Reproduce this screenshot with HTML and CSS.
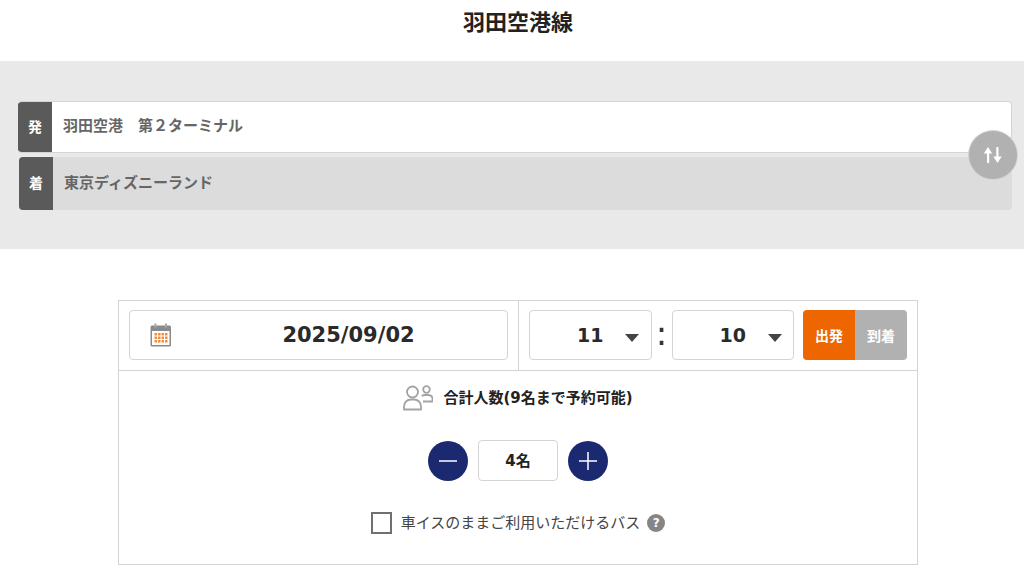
FILE: index.html
```html
<!DOCTYPE html>
<html lang="ja">
<head>
  <meta charset="UTF-8">
  <meta name="viewport" content="width=device-width, initial-scale=1.0">
  <title>羽田空港線</title>
  <link rel="stylesheet" href="styles.css">
</head>
<body>

<div class="page">
  <h1 class="line-title">羽田空港線</h1>

  <div class="route-band">
    <div class="route-box">
      <div class="route-row route-from">
        <span class="route-label">発</span>
        <span class="route-name">羽田空港　第２ターミナル</span>
      </div>
      <div class="route-row route-to">
        <span class="route-label">着</span>
        <span class="route-name">東京ディズニーランド</span>
      </div>
      <button class="swap-btn" aria-label="入れ替え">
        <svg width="20" height="18" viewBox="0 0 20 18">
          <path d="M5 1L.8 7.500H4V17h2.200V7.500H9.200zM14.500 17l4.200-6.500h-3.200V1h-2.200v9.500H10.300z" fill="#fff"/>
        </svg>
      </button>
    </div>
  </div>

  <div class="search-card">
    <div class="when-row">
      <div class="date-cell">
        <div class="field date-field">
          <svg class="cal-icon" width="22" height="24" viewBox="0 0 22 24">
            <rect x="0.500" y="2.500" width="20.500" height="21" rx="1.500" fill="#8a8a8a"/>
            <rect x="2" y="8" width="17.500" height="14" fill="#fff"/>
            <path d="M5.500 0.500v4M16 0.500v4" stroke="#a8a8a8" stroke-width="2"/>
            <path d="M4.500 10h2.500v2.500H4.500zM8 10h2.500v2.500H8zM11.500 10H14v2.500h-2.500zM15 10h2.500v2.500H15zM4.500 13.500h2.500V16H4.500zM8 13.500h2.500V16H8zM11.500 13.500H14V16h-2.500zM15 13.500h2.500V16H15zM4.500 17h2.500v2.500H4.500zM8 17h2.500v2.500H8zM11.500 17H14v2.500h-2.500zM15 17h2.500v2.500H15z" fill="#f58b3c"/>
          </svg>
          <span class="date-value">2025/09/02</span>
        </div>
      </div>
      <div class="time-cell">
        <div class="field time-field"><span class="time-value">11</span><span class="caret"></span></div>
        <span class="colon">:</span>
        <div class="field time-field"><span class="time-value">10</span><span class="caret"></span></div>
        <div class="dep-arr">
          <span class="dep-btn">出発</span>
          <span class="arr-btn">到着</span>
        </div>
      </div>
    </div>

    <div class="people-head">
      <svg width="30" height="26" viewBox="0 0 30 26" fill="none" stroke="#a3a3a3" stroke-width="1.800">
        <circle cx="9.500" cy="7" r="5.500"/>
        <path d="M1 24.500v-3c0-4 3-7 7-7h3c4 0 7 3 7 7v3z" stroke-linejoin="round"/>
        <circle cx="23.500" cy="4.500" r="3.300"/>
        <path d="M20 16.500h9.500v-2.500c0-2.500-2-4-4.500-4h-3c-1.500 0-2.500.5-3.200 1.200" stroke-linejoin="round"/>
      </svg>
      <span class="people-title">合計人数(9名まで予約可能)</span>
    </div>

    <div class="counter">
      <button class="round-btn" aria-label="減らす">
        <svg width="18" height="18" viewBox="0 0 18 18"><path d="M0 9h18" stroke="#fff" stroke-width="1.500"/></svg>
      </button>
      <div class="field count-field"><span class="count-text">4名</span></div>
      <button class="round-btn" aria-label="増やす">
        <svg width="18" height="18" viewBox="0 0 18 18"><path d="M0 9h18M9 0v18" stroke="#fff" stroke-width="1.500"/></svg>
      </button>
    </div>

    <div class="wheelchair">
      <span class="check"></span>
      <span class="wheelchair-text">車イスのままご利用いただけるバス</span>
      <span class="help">?</span>
    </div>
  </div>
</div>

</body>
</html>
```

FILE: styles.css
```css
html, body {
  margin: 0;
  padding: 0;
  overflow: hidden;
  background-color: #fff;
}
body {
  font-family: "DejaVu Sans", "Noto Sans CJK JP", sans-serif;
  color: #222;
}
.page {
  width: 1036px;
}
.line-title {
  margin: 0;
  height: 61px;
  padding-top: 7px;
  box-sizing: border-box;
  text-align: center;
  font-size: 22px;
  line-height: 32px;
  font-weight: 700;
  color: #222;
}
.route-band {
  background-color: #e9e9e9;
  height: 188px;
  padding: 40px 24px 0 18px;
  box-sizing: border-box;
}
.route-box {
  position: relative;
  display: flex;
  flex-direction: column;
  gap: 4px;
}
.route-row {
  display: flex;
  align-items: center;
  height: 52px;
  box-sizing: border-box;
  border-radius: 4px;
  overflow: hidden;
  font-size: 15px;
  font-weight: 700;
  color: #666;
}
.route-from {
  background-color: #fff;
  border: 1px solid #d4d4d4;
  border-left: 0;
}
.route-to {
  background-color: #dcdcdc;
  height: 53px;
  margin-left: 1px;
}
.route-label {
  align-self: stretch;
  width: 34px;
  padding-bottom: 3px;
  box-sizing: border-box;
  display: flex;
  align-items: center;
  justify-content: center;
  background-color: #5a5a5a;
  color: #fff;
  font-size: 14px;
}
.route-name {
  margin-left: 11px;
  padding-bottom: 5px;
}
.swap-btn {
  position: absolute;
  right: -5px;
  top: 30px;
  width: 48px;
  height: 48px;
  border: 0;
  padding: 0;
  border-radius: 50%;
  background-color: #b1b1b1;
  box-shadow: 0 0 0 1px #d2d2d2;
  display: flex;
  align-items: center;
  justify-content: center;
}
.search-card {
  width: 800px;
  height: 265px;
  margin: 51px 0 0 118px;
  box-sizing: border-box;
  border: 1px solid #d4d4d4;
}
.when-row {
  display: flex;
  height: 70px;
  box-sizing: border-box;
  border-bottom: 1px solid #d4d4d4;
}
.field {
  box-sizing: border-box;
  border: 1px solid #d4d4d4;
  border-radius: 4px;
  background-color: #fff;
}
.date-cell {
  width: 400px;
  box-sizing: border-box;
  padding: 9px 10px;
  border-right: 1px solid #d4d4d4;
}
.date-field {
  position: relative;
  height: 50px;
  display: flex;
  align-items: center;
  justify-content: center;
  padding-left: 60px;
}
.cal-icon {
  position: absolute;
  left: 20px;
  top: 12px;
}
.date-value {
  font-weight: 700;
  font-size: 21px;
  color: #2a2a2a;
}
.time-cell {
  display: flex;
  align-items: center;
  align-self: flex-start;
  padding: 9px 0 0 10px;
}
.time-field {
  width: 122.500px;
  height: 50px;
  display: flex;
  align-items: center;
  padding-left: 47px;
}
.time-value {
  font-weight: 700;
  font-size: 19px;
  color: #2a2a2a;
  width: 48px;
}
.caret {
  width: 0;
  height: 0;
  border-left: 7.500px solid transparent;
  border-right: 7.500px solid transparent;
  border-top: 8px solid #444;
  margin-top: 6px;
}
.colon {
  width: 20px;
  text-align: center;
  font-size: 34px;
  color: #333;
  padding-bottom: 4px;
}
.dep-arr {
  display: flex;
  width: 104px;
  height: 50px;
  margin-left: 9px;
  border-radius: 4px;
  overflow: hidden;
  font-size: 14px;
  font-weight: 700;
  color: #fff;
}
.dep-btn, .arr-btn {
  width: 52px;
  padding-bottom: 1px;
  box-sizing: border-box;
  display: flex;
  align-items: center;
  justify-content: center;
}
.dep-btn {
  background-color: #ee6600;
}
.arr-btn {
  background-color: #b1b1b1;
}
.people-head {
  display: flex;
  align-items: center;
  justify-content: center;
  gap: 10px;
  height: 26px;
  margin-top: 14px;
}
.people-title {
  font-size: 15px;
  font-weight: 700;
  color: #222;
  padding-bottom: 4px;
}
.counter {
  display: flex;
  align-items: center;
  justify-content: center;
  gap: 10px;
  margin-top: 29px;
}
.round-btn {
  width: 40px;
  height: 40px;
  border: 0;
  padding: 0;
  border-radius: 50%;
  background-color: #1b2a70;
  display: flex;
  align-items: center;
  justify-content: center;
}
.count-field {
  width: 80px;
  height: 41px;
  display: flex;
  align-items: center;
  justify-content: center;
}
.count-text {
  font-size: 15px;
  font-weight: 700;
  color: #222;
  padding-bottom: 3px;
}
.wheelchair {
  display: flex;
  align-items: center;
  justify-content: center;
  margin-top: 30px;
}
.check {
  width: 21px;
  height: 22px;
  box-sizing: border-box;
  border: 2px solid #707070;
  margin-right: 9px;
}
.wheelchair-text {
  font-size: 15px;
  color: #444;
  padding-bottom: 3px;
}
.help {
  width: 18px;
  height: 18px;
  margin-left: 7px;
  border-radius: 50%;
  background-color: #858585;
  color: #fff;
  font-size: 12px;
  font-weight: 700;
  line-height: 18px;
  text-align: center;
}
```
